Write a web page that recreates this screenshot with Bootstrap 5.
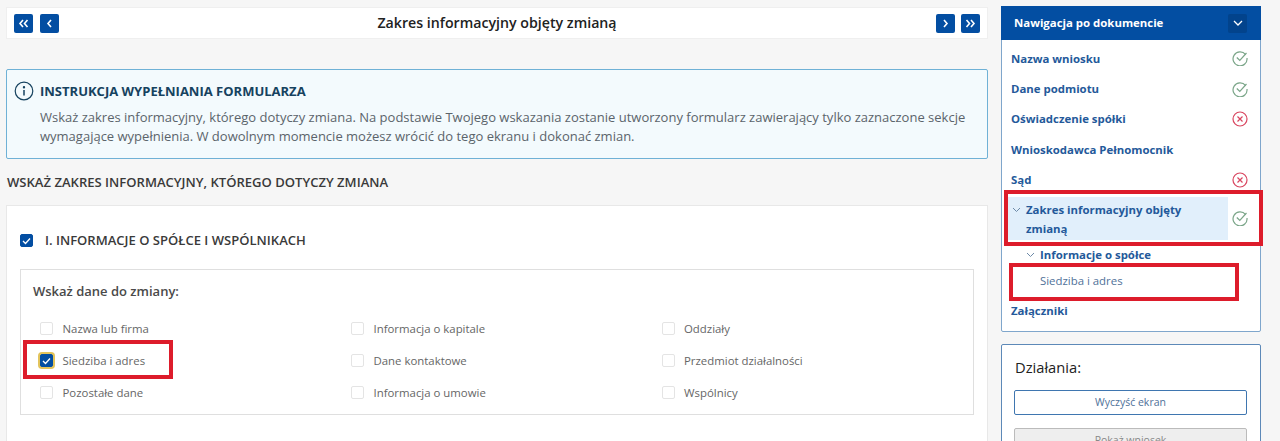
<!DOCTYPE html>
<html lang="pl">
<head>
<meta charset="utf-8">
<title>Zakres informacyjny</title>
<link href="https://cdn.jsdelivr.net/npm/bootstrap@5.3.0/dist/css/bootstrap.min.css" rel="stylesheet">
<style>
html,body{height:441px;overflow:hidden}
body{background:#f6f6f6;font-family:"Open Sans",sans-serif;color:#2b2b2b;position:relative}
.shell{padding:7px 19px 0 6px;gap:13px}
.left-col{width:982px;flex:none}
.right-col{width:260px;flex:none}
.topbar{height:32px;background:#fff;border:1px solid #efefef;padding:0 7px;margin-bottom:30px}
.topbar h1{font-size:14.2px;font-weight:600;margin:0;color:#222}
.sq{width:19px;height:19px;background:#034ea2;border-radius:2px;border:0;padding:0;color:#fff}
.sq svg{display:block;margin:auto}
.pairgap{gap:6.5px}
.info{height:90px;background:#f3fafd;border:1px solid #6fb1d6;border-radius:2px;padding:10px 7px}
.info h2{font-size:13px;font-weight:700;color:#16425f;margin:0;line-height:22px;gap:6px}
.info p{font-size:13px;line-height:19.3px;color:#5b646b;margin:6px 0 0 26px}
.sect{font-size:13.07px;font-weight:600;color:#3a3a3a;margin:14px 0 14px 1px;line-height:18px}
.panel{background:#fff;border:1px solid #e8e8e8;height:260px;padding:0 13px}
.ptitle{height:63px;padding-top:6px;font-size:13.05px;font-weight:600;color:#3a3a3a;gap:12px}
.cb{width:13px;height:13px;border:1px solid #e4e4e4;background:#fff;border-radius:2px;flex:none;display:flex;align-items:center;justify-content:center}
.cb.on{background:#034ea2;border-color:#034ea2}
.cb.foc{box-shadow:0 0 0 2px #e3c45c}
.inner{border:1px solid #dfdfdf;height:146px;padding:11px 13px 11px 12px}
.inner h3{font-size:13px;font-weight:600;color:#4a4a4a;margin:0 0 19.5px;line-height:20px}
.opts{display:grid;grid-template-columns:311px 310.5px 1fr;grid-auto-rows:32px;padding-left:7px}
.opt{font-size:11.4px;color:#666;gap:9.5px;height:16px}
.nav-box{background:#fff;border:1px solid #7fa6cc;border-radius:2px;height:326px;margin-top:-1px}
.nav-head{height:34px;background:#034ea2;color:#fff;font-size:11.4px;font-weight:700;padding:0 14px 0 13px;margin:-1px -1px 0}
.tog{width:19px;height:19px;background:#02438c;border-radius:2px}
.nrow{height:30.4px;padding:0 12px 0 9px;font-size:11.4px;font-weight:700;color:#24599a}
.gapper{height:3px}
.ok-ico{stroke:#7ba689;stroke-width:1.2;fill:none}
.no-ico{stroke:#d9455f;stroke-width:1.2;fill:none}
.nrow.act{height:auto;padding:0 12px 0 0;margin-top:2px}
.actlbl{background:#e1effb;width:221px;line-height:19.5px;padding:3px 4px 1px 19px;position:relative;margin-left:5px}
.actlbl svg{position:absolute;left:5px;top:10px}
.sub1{font-size:11.4px;font-weight:700;color:#24599a;padding-left:24px;height:22px;margin-top:4px;gap:5px}
.sub2{font-size:11.4px;color:#4f7199;padding-left:38px;height:30px}
.nrow.last{height:30px}
.act-box{background:#fff;border:1px solid #5d89b8;border-radius:2px;margin-top:12px;height:140px;padding:11px 13px 12px 12px}
.act-box h4{font-size:14.7px;font-weight:400;margin:0 0 12px 1px;line-height:22px;color:#222}
.abtn{height:25px;border:1px solid #3f76b0;border-radius:2px;font-size:10.5px;color:#4f7199;background:#fff;margin-bottom:13px}
.abtn.off{background:#eee;border-color:#bbb;color:#888}
.redbox{position:absolute;border:4px solid #dd1c2b;pointer-events:none}
.r1{left:1004px;top:190px;width:259px;height:56px}
.r2{left:1009px;top:263px;width:230px;height:38px}
.r3{left:23px;top:340px;width:150px;height:39px}
</style>
</head>
<body>
<div class="d-flex align-items-start shell">
  <main class="left-col">
    <div class="topbar d-flex align-items-center justify-content-between">
      <div class="d-flex pairgap">
        <button class="sq" aria-label="Pierwszy"><svg width="11" height="9" viewBox="0 0 11 9" fill="none" stroke="#fff" stroke-width="1.6"><path d="M5 1 2 4.5 5 8M9.5 1 6.5 4.5 9.5 8"/></svg></button>
        <button class="sq" aria-label="Poprzedni"><svg width="7" height="9" viewBox="0 0 7 9" fill="none" stroke="#fff" stroke-width="1.6"><path d="M5 1 2 4.5 5 8"/></svg></button>
      </div>
      <h1>Zakres informacyjny objęty zmianą</h1>
      <div class="d-flex pairgap">
        <button class="sq" aria-label="Następny"><svg width="7" height="9" viewBox="0 0 7 9" fill="none" stroke="#fff" stroke-width="1.6"><path d="M2 1 5 4.5 2 8"/></svg></button>
        <button class="sq" aria-label="Ostatni"><svg width="11" height="9" viewBox="0 0 11 9" fill="none" stroke="#fff" stroke-width="1.6"><path d="M1.5 1 4.5 4.5 1.5 8M6 1 9 4.5 6 8"/></svg></button>
      </div>
    </div>

    <section class="info">
      <h2 class="d-flex align-items-center"><svg width="20" height="20" viewBox="0 0 20 20" fill="none" stroke="#16425f" stroke-width="1.2"><circle cx="10" cy="10" r="8.8"/><path d="M10 9v5.5" stroke-width="1.5"/><circle cx="10" cy="6.3" r=".6" fill="#16425f"/></svg>INSTRUKCJA WYPEŁNIANIA FORMULARZA</h2>
      <p>Wskaż zakres informacyjny, którego dotyczy zmiana. Na podstawie Twojego wskazania zostanie utworzony formularz zawierający tylko zaznaczone sekcje wymagające wypełnienia. W dowolnym momencie możesz wrócić do tego ekranu i dokonać zmian.</p>
    </section>

    <div class="sect">WSKAŻ ZAKRES INFORMACYJNY, KTÓREGO DOTYCZY ZMIANA</div>

    <section class="panel">
      <div class="ptitle d-flex align-items-center">
        <span class="cb on"><svg width="9" height="8" viewBox="0 0 9 8" fill="none" stroke="#fff" stroke-width="1.3"><path d="M1 4 3.5 6.5 8 1.5"/></svg></span>
        I. INFORMACJE O SPÓŁCE I WSPÓLNIKACH
      </div>
      <div class="inner">
        <h3>Wskaż dane do zmiany:</h3>
        <div class="opts">
          <div class="opt d-flex align-items-center"><span class="cb"></span>Nazwa lub firma</div>
          <div class="opt d-flex align-items-center"><span class="cb"></span>Informacja o kapitale</div>
          <div class="opt d-flex align-items-center"><span class="cb"></span>Oddziały</div>
          <div class="opt d-flex align-items-center"><span class="cb on foc"><svg width="9" height="8" viewBox="0 0 9 8" fill="none" stroke="#fff" stroke-width="1.3"><path d="M1 4 3.5 6.5 8 1.5"/></svg></span>Siedziba i adres</div>
          <div class="opt d-flex align-items-center"><span class="cb"></span>Dane kontaktowe</div>
          <div class="opt d-flex align-items-center"><span class="cb"></span>Przedmiot działalności</div>
          <div class="opt d-flex align-items-center"><span class="cb"></span>Pozostałe dane</div>
          <div class="opt d-flex align-items-center"><span class="cb"></span>Informacja o umowie</div>
          <div class="opt d-flex align-items-center"><span class="cb"></span>Wspólnicy</div>
        </div>
      </div>
    </section>
  </main>

  <aside class="right-col">
    <nav class="nav-box">
      <div class="nav-head d-flex align-items-center justify-content-between">
        <span>Nawigacja po dokumencie</span>
        <span class="tog d-flex align-items-center justify-content-center"><svg width="10" height="6" viewBox="0 0 10 6" fill="none" stroke="#fff" stroke-width="1.3"><path d="M1 1 5 5 9 1"/></svg></span>
      </div>
      <div class="gapper"></div>
      <div class="nrow d-flex align-items-center justify-content-between">Nazwa wniosku<svg class="ok-ico" width="16" height="16" viewBox="0 0 16 16"><path d="M13.6 4.6A7 7 0 1 0 15 8"/><path d="M4.8 7.5 7.8 10.5 14.5 3"/></svg></div>
      <div class="nrow d-flex align-items-center justify-content-between">Dane podmiotu<svg class="ok-ico" width="16" height="16" viewBox="0 0 16 16"><path d="M13.6 4.6A7 7 0 1 0 15 8"/><path d="M4.8 7.5 7.8 10.5 14.5 3"/></svg></div>
      <div class="nrow d-flex align-items-center justify-content-between">Oświadczenie spółki<svg class="no-ico" width="16" height="16" viewBox="0 0 16 16"><circle cx="8" cy="8" r="7"/><path d="M5.5 5.5 10.5 10.5M10.5 5.5 5.5 10.5"/></svg></div>
      <div class="nrow d-flex align-items-center justify-content-between">Wnioskodawca Pełnomocnik</div>
      <div class="nrow d-flex align-items-center justify-content-between">Sąd<svg class="no-ico" width="16" height="16" viewBox="0 0 16 16"><circle cx="8" cy="8" r="7"/><path d="M5.5 5.5 10.5 10.5M10.5 5.5 5.5 10.5"/></svg></div>
      <div class="nrow act d-flex align-items-center justify-content-between">
        <div class="actlbl"><svg width="9" height="6" viewBox="0 0 9 6" fill="none" stroke="#6d8aa8" stroke-width="1"><path d="M1 1 4.5 4.5 8 1"/></svg>Zakres informacyjny objęty zmianą</div>
        <svg class="ok-ico" width="16" height="16" viewBox="0 0 16 16"><path d="M13.6 4.6A7 7 0 1 0 15 8"/><path d="M4.8 7.5 7.8 10.5 14.5 3"/></svg>
      </div>
      <div class="sub1 d-flex align-items-center"><svg width="9" height="6" viewBox="0 0 9 6" fill="none" stroke="#6d8aa8" stroke-width="1"><path d="M1 1 4.5 4.5 8 1"/></svg>Informacje o spółce</div>
      <div class="sub2 d-flex align-items-center">Siedziba i adres</div>
      <div class="nrow last d-flex align-items-center">Załączniki</div>
    </nav>
    <section class="act-box">
      <h4>Działania:</h4>
      <div class="abtn d-flex align-items-center justify-content-center">Wyczyść ekran</div>
      <div class="abtn off d-flex align-items-center justify-content-center">Pokaż wniosek</div>
    </section>
  </aside>
</div>

<div class="redbox r1"></div>
<div class="redbox r2"></div>
<div class="redbox r3"></div>
<script src="https://cdn.jsdelivr.net/npm/bootstrap@5.3.0/dist/js/bootstrap.bundle.min.js"></script>
</body>
</html>
